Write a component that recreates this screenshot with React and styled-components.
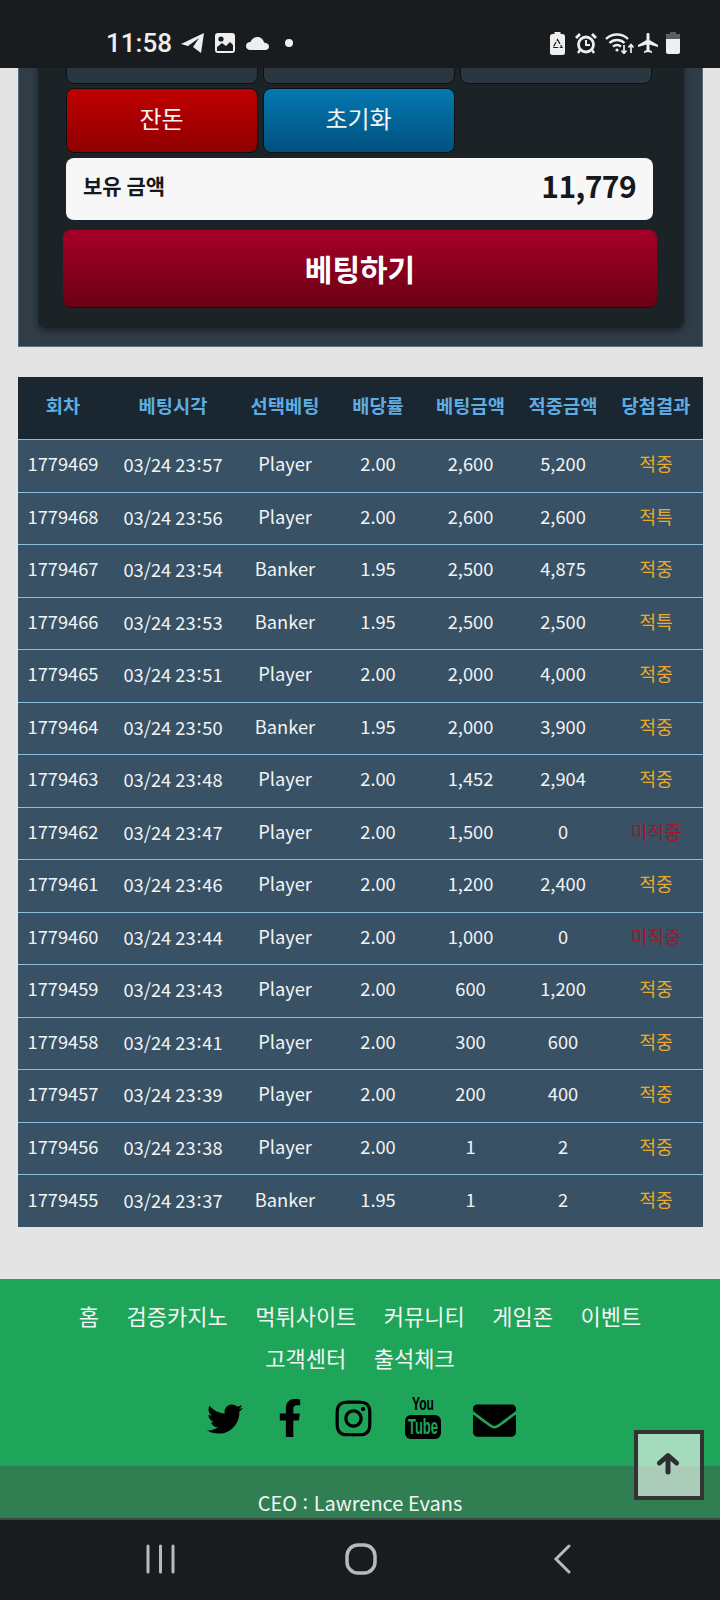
import React from 'react';
import styled, { createGlobalStyle } from 'styled-components';
import { FaTwitter, FaFacebookF, FaInstagram, FaEnvelope } from 'react-icons/fa';
import { MdAirplanemodeActive } from 'react-icons/md';

const GlobalStyle = createGlobalStyle`
  html, body { margin: 0; padding: 0; background: #e4e4e4; }
  * { box-sizing: border-box; }
  body { font-family: "Noto Sans CJK KR", "Noto Sans", sans-serif; }
`;

const Screen = styled.div`
  position: relative;
  width: 720px;
  height: 1600px;
  display: flex;
  flex-direction: column;
  overflow: hidden;
  background: #e4e4e4;
`;

const StatusBar = styled.div`
  height: 68px;
  flex: none;
  display: flex;
  align-items: center;
  justify-content: space-between;
  padding: 18px 40px 0 106px;
  background: #181c1f;
  color: #eeeeee;
`;
const StatusGroup = styled.div`
  display: flex;
  align-items: center;
`;
const StatusSlot = styled.span`
  display: flex;
  margin-left: ${(p) => p.$ml || 0}px;
`;
const Clock = styled.span`
  font-family: Roboto, sans-serif;
  font-size: 26px;
  font-weight: 500;
  color: #eeeeee;
`;
const Dot = styled.span`
  width: 8px;
  height: 8px;
  margin-left: 16px;
  border-radius: 50%;
  background: #eeeeee;
`;

const Main = styled.div`
  flex: 1;
  min-height: 0;
  overflow: hidden;
`;

const OuterPanel = styled.section`
  margin: -49px 17px 0 18px;
  padding: 0 18px 18px 19px;
  background: #303d47;
  border-bottom: 1px solid #5f7383;
  border-left: 1px solid #566876;
  border-right: 1px solid #566876;
`;
const InnerPanel = styled.div`
  padding: 0 25px 20px;
  background: #1b2327;
  border-radius: 0 0 8px 8px;
  box-shadow: 0 3px 7px rgba(0, 0, 0, 0.45);
`;
const ButtonGrid = styled.div`
  display: grid;
  grid-template-columns: repeat(3, 192px);
  gap: 4px 5px;
  margin-left: 2.5px;
`;
const colors = {
  dark: 'linear-gradient(#2b3740, #2b3740)',
  red: 'linear-gradient(#c00000, #8f0000)',
  blue: 'linear-gradient(#0478b0, #00517f)',
};
const ChipButton = styled.button`
  height: 65px;
  padding: 0 0 6px;
  border: 1px solid #0c1014;
  border-radius: 8px;
  background: ${(p) => colors[p.$tone]};
  color: #f4f4f4;
  font-family: inherit;
  font-size: 24px;
`;
const Balance = styled.div`
  display: flex;
  align-items: center;
  justify-content: space-between;
  width: 587px;
  height: 63px;
  margin: 5px 0 9px 3px;
  padding: 0 17px 8px 17px;
  background: #f7f7f7;
  border-radius: 8px;
  border-bottom: 1px solid #10203a;
  color: #15191c;
`;
const BalanceLabel = styled.span`
  font-size: 21px;
  font-weight: 700;
`;
const BalanceValue = styled.span`
  font-size: 30px;
  font-weight: 700;
  letter-spacing: -0.6px;
`;
const BetButton = styled.button`
  display: block;
  width: 594px;
  height: 78px;
  padding: 0 0 2px;
  border: none;
  border-bottom: 1px solid #3a0010;
  border-radius: 8px;
  background: linear-gradient(#a60026, #6a0015);
  color: #ffffff;
  font-family: inherit;
  font-size: 30px;
  font-weight: 700;
`;

const HistoryTable = styled.table`
  width: 685px;
  margin: 30px 0 52px 18px;
  border-collapse: collapse;
  table-layout: fixed;
  font-size: 18.3px;
`;
const HeadCell = styled.th`
  width: ${(p) => p.$w}px;
  height: 62.5px;
  padding: 0 0 7px;
  background: #1a2630;
  color: #5dade2;
  font-weight: 700;
  font-size: 18.7px;
  white-space: nowrap;
`;
const Row = styled.tr`
  height: 52.5px;
  background: #385164;
  border-top: 1px solid #8fbcd9;
`;
const Cell = styled.td`
  padding: 0 0 5px;
  text-align: center;
  color: ${(p) => p.$color || '#f2f4f5'};
  white-space: nowrap;
`;
const Colon = styled.span`
  vertical-align: 2px;
  margin: 0 ${(p) => p.$space || 0.8}px;
`;

const Footer = styled.footer`
  background: #1fa55a;
`;
const FooterTop = styled.div`
  height: 187px;
  padding-top: 15px;
  display: flex;
  flex-direction: column;
  align-items: center;
`;
const FooterNav = styled.nav`
  display: flex;
  flex-wrap: wrap;
  justify-content: center;
  gap: 0 27.5px;
  width: 600px;
  font-size: 22px;
  line-height: 42px;
  color: #f4f4f4;
`;
const Socials = styled.div`
  display: flex;
  align-items: center;
  height: 42px;
  margin-top: 19px;
  color: #000000;
`;
const SocialSlot = styled.a`
  display: flex;
  justify-content: center;
  width: ${(p) => p.$w}px;
  padding-top: ${(p) => p.$pt || 0}px;
`;
const YouTubeMark = styled.svg`
  width: 36px;
  height: 42px;
  overflow: visible;
`;
const FooterBottom = styled.div`
  padding: 22px 0 4px;
  background: #2f7f52;
  text-align: center;
  color: #f4f4f4;
  font-size: 20px;
  line-height: 26px;
`;

const NavBar = styled.div`
  height: 82px;
  flex: none;
  display: flex;
  align-items: center;
  padding-left: 145.5px;
  background: #181c1f;
  border-top: 2px solid #3c4a43;
  color: #b9b9b9;
`;
const NavIcon = styled.svg`
  display: block;
  width: ${(p) => p.$w}px;
  height: 32px;
  margin: -2px 0 0 ${(p) => p.$ml || 0}px;
`;

const ScrollTop = styled.button`
  position: absolute;
  right: 16px;
  bottom: 100px;
  width: 70px;
  height: 70px;
  display: flex;
  align-items: center;
  justify-content: center;
  padding: 0 2px 4px 0;
  border: 4px solid #333333;
  background: rgba(255, 255, 255, 0.6);
`;

const TelegramIcon = () => (
  <svg width="23" height="20" viewBox="0 0 23 20" fill="#eeeeee">
    <path d="M0 11 L23 0 L20 20 L12 14 L18 5 L7 13 Z" />
  </svg>
);
const ImageIcon = () => (
  <svg width="20" height="20" viewBox="0 0 20 20">
    <rect width="20" height="20" rx="3" fill="#eeeeee" />
    <circle cx="6" cy="6" r="2.6" fill="#181c1f" />
    <path d="M2 18 V14 L7 10 L11 13 L15 9 L18 12 V18 Z" fill="#181c1f" />
  </svg>
);
const CloudIcon = () => (
  <svg width="23" height="13" viewBox="0 0 23 13" fill="#eeeeee">
    <path d="M4.5 13 C1.5 13 0 11 0 9 C0 6.500 2 5 4.500 5 C5.500 2 8 0 11.500 0 C15 0 17.500 2.500 18 5.500 C20.800 5.800 23 7 23 9.500 C23 11.500 21.500 13 19 13 Z" />
  </svg>
);
const SaverIcon = () => (
  <svg width="15" height="23" viewBox="0 0 15 23">
    <rect x="4.5" width="6" height="3" fill="#eeeeee" />
    <rect y="2" width="15" height="21" rx="2.5" fill="#eeeeee" />
    <path d="M7.5 7.500 L12 15.500 H3 Z" fill="none" stroke="#181c1f" strokeWidth="1.2" strokeDasharray="5 1.500" />
  </svg>
);
const AlarmIcon = () => (
  <svg width="22" height="21" viewBox="0 0 22 21" fill="none" stroke="#eeeeee">
    <circle cx="11" cy="11.5" r="7.5" strokeWidth="2.8" />
    <path d="M11 7 V12 H15" strokeWidth="2" />
    <path d="M1 5 L5 1 M21 5 L17 1" strokeWidth="2.8" />
    <path d="M5 17 L3 20 M17 17 L19 20" strokeWidth="2.4" />
  </svg>
);
const WifiIcon = () => (
  <svg width="29" height="21" viewBox="0 0 29 21" fill="none" stroke="#eeeeee" strokeWidth="2.4">
    <path d="M1 6 C7 0 17 0 23 6" />
    <path d="M4.5 10 C8.5 6 15.5 6 19.5 10" />
    <path d="M8 13.5 C10.5 11.5 13.5 11.5 16 13.5" />
    <circle cx="12" cy="17" r="1.6" fill="#eeeeee" stroke="none" />
    <path d="M19 12 V20 M16.5 17.5 L19 20.5 L21.5 17.5" strokeWidth="1.7" />
    <path d="M26 20 V12 M23.5 14.5 L26 11.5 L28.5 14.5" strokeWidth="1.7" />
  </svg>
);
const BatteryIcon = () => (
  <svg width="14" height="22" viewBox="0 0 14 22">
    <rect x="4" width="6" height="3" fill="#5b5d5f" />
    <rect y="2" width="14" height="20" rx="2" fill="#eeeeee" />
    <path d="M0 7 V4 a2 2 0 0 1 2 -2 H12 a2 2 0 0 1 2 2 V7 Z" fill="#5b5d5f" />
  </svg>
);
const ArrowIcon = () => (
  <svg width="24" height="23" viewBox="0 0 24 23" fill="none" stroke="#2e2e2e" strokeWidth="5" strokeLinecap="round" strokeLinejoin="round">
    <path d="M12 20 V4 M3.500 11 L12 3.500 L20.500 11" />
  </svg>
);

const COLUMNS = [
  ['회차', 90],
  ['베팅시각', 130],
  ['선택베팅', 94],
  ['배당률', 92],
  ['베팅금액', 93],
  ['적중금액', 92],
  ['당첨결과', 94],
];

const ROWS = [
  ['1779469', '03/24 23:57', 'Player', '2.00', '2,600', '5,200', '적중'],
  ['1779468', '03/24 23:56', 'Player', '2.00', '2,600', '2,600', '적특'],
  ['1779467', '03/24 23:54', 'Banker', '1.95', '2,500', '4,875', '적중'],
  ['1779466', '03/24 23:53', 'Banker', '1.95', '2,500', '2,500', '적특'],
  ['1779465', '03/24 23:51', 'Player', '2.00', '2,000', '4,000', '적중'],
  ['1779464', '03/24 23:50', 'Banker', '1.95', '2,000', '3,900', '적중'],
  ['1779463', '03/24 23:48', 'Player', '2.00', '1,452', '2,904', '적중'],
  ['1779462', '03/24 23:47', 'Player', '2.00', '1,500', '0', '미적중'],
  ['1779461', '03/24 23:46', 'Player', '2.00', '1,200', '2,400', '적중'],
  ['1779460', '03/24 23:44', 'Player', '2.00', '1,000', '0', '미적중'],
  ['1779459', '03/24 23:43', 'Player', '2.00', '600', '1,200', '적중'],
  ['1779458', '03/24 23:41', 'Player', '2.00', '300', '600', '적중'],
  ['1779457', '03/24 23:39', 'Player', '2.00', '200', '400', '적중'],
  ['1779456', '03/24 23:38', 'Player', '2.00', '1', '2', '적중'],
  ['1779455', '03/24 23:37', 'Banker', '1.95', '1', '2', '적중'],
];

const NAV_LINKS = ['홈', '검증카지노', '먹튀사이트', '커뮤니티', '게임존', '이벤트', '고객센터', '출석체크'];

const resultColor = (r) => (r === '미적중' ? '#a31528' : '#eba92a');

// the colon sits a little high in these times
const withColon = (text) => {
  const [left, right] = text.split(':');
  return right === undefined ? text : (
    <>
      {left}<Colon>:</Colon>{right}
    </>
  );
};

export default function App() {
  return (
    <Screen>
      <GlobalStyle />
      <StatusBar>
        <StatusGroup>
          <Clock>11:58</Clock>
          <StatusSlot $ml={9}><TelegramIcon /></StatusSlot>
          <StatusSlot $ml={11}><ImageIcon /></StatusSlot>
          <StatusSlot $ml={11}><CloudIcon /></StatusSlot>
          <Dot />
        </StatusGroup>
        <StatusGroup>
          <SaverIcon />
          <StatusSlot $ml={10}><AlarmIcon /></StatusSlot>
          <StatusSlot $ml={8}><WifiIcon /></StatusSlot>
          <StatusSlot $ml={2}><MdAirplanemodeActive size={24} color="#eeeeee" /></StatusSlot>
          <StatusSlot $ml={6}><BatteryIcon /></StatusSlot>
        </StatusGroup>
      </StatusBar>

      <Main>
        <OuterPanel>
          <InnerPanel>
            <ButtonGrid>
              <ChipButton $tone="dark" />
              <ChipButton $tone="dark" />
              <ChipButton $tone="dark" />
              <ChipButton $tone="red">잔돈</ChipButton>
              <ChipButton $tone="blue">초기화</ChipButton>
            </ButtonGrid>
            <Balance>
              <BalanceLabel>보유 금액</BalanceLabel>
              <BalanceValue>11,779</BalanceValue>
            </Balance>
            <BetButton>베팅하기</BetButton>
          </InnerPanel>
        </OuterPanel>

        <HistoryTable>
          <thead>
            <tr>
              {COLUMNS.map(([label, w]) => (
                <HeadCell key={label} $w={w}>{label}</HeadCell>
              ))}
            </tr>
          </thead>
          <tbody>
            {ROWS.map((row) => (
              <Row key={row[0]}>
                {row.map((value, i) => (
                  <Cell key={i} $color={i === 6 ? resultColor(value) : undefined}>{withColon(value)}</Cell>
                ))}
              </Row>
            ))}
          </tbody>
        </HistoryTable>

        <Footer>
          <FooterTop>
            <FooterNav>
              {NAV_LINKS.map((link) => (
                <span key={link}>{link}</span>
              ))}
            </FooterNav>
            <Socials>
              <SocialSlot $w={66} $pt={2}><FaTwitter size={36} /></SocialSlot>
              <SocialSlot $w={64}><FaFacebookF size={38} /></SocialSlot>
              <SocialSlot $w={62} $pt={1}><FaInstagram size={41} /></SocialSlot>
              <SocialSlot $w={77}>
                <YouTubeMark viewBox="0 0 36 42">
                  <text x="18" y="13" textAnchor="middle" fontFamily="Liberation Sans" fontSize="18" fontWeight="700" textLength="22" lengthAdjust="spacingAndGlyphs">You</text>
                  <rect y="18" width="36" height="24" rx="6" fill="#000" />
                  <text x="18" y="37" textAnchor="middle" fill="#1fa55a" fontFamily="Liberation Sans" fontSize="22" fontWeight="700" textLength="30" lengthAdjust="spacingAndGlyphs">Tube</text>
                </YouTubeMark>
              </SocialSlot>
              <SocialSlot $w={67} $pt={4}><FaEnvelope size={43} /></SocialSlot>
            </Socials>
          </FooterTop>
          <FooterBottom>CEO <Colon $space={1}>:</Colon> Lawrence Evans</FooterBottom>
        </Footer>
      </Main>

      <NavBar>
        <NavIcon $w={30} viewBox="0 0 30 32" fill="none" stroke="currentColor" strokeWidth="3" strokeLinecap="round">
          <path d="M2 3 V29 M14.500 3 V29 M27 3 V29" />
        </NavIcon>
        <NavIcon $w={32} $ml={169.5} viewBox="0 0 32 32" fill="none" stroke="currentColor" strokeWidth="3.500">
          <rect x="2" y="2" width="28" height="28" rx="11" />
        </NavIcon>
        <NavIcon $w={18} $ml={175.5} viewBox="0 0 18 32" fill="none" stroke="currentColor" strokeWidth="3" strokeLinecap="round">
          <path d="M16 3 L3 16 L16 29" />
        </NavIcon>
      </NavBar>

      <ScrollTop aria-label="top">
        <ArrowIcon />
      </ScrollTop>
    </Screen>
  );
}
